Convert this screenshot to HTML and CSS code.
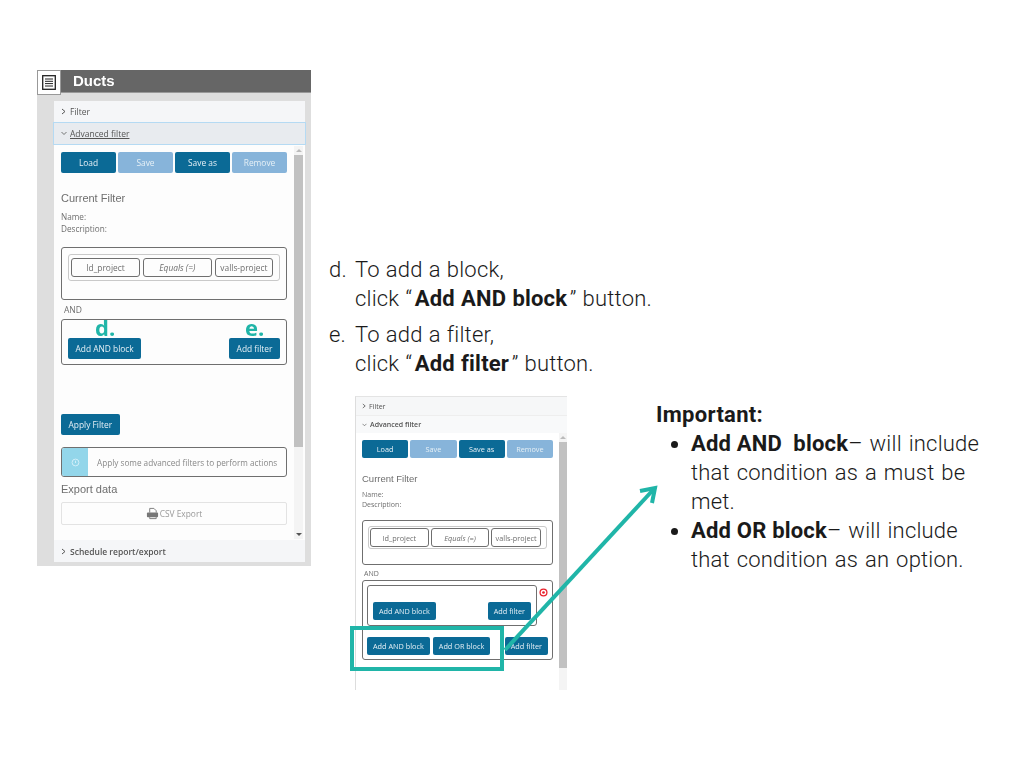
FILE: index.html
```html
<!DOCTYPE html>
<html lang="en">
<head>
  <meta charset="UTF-8" />
  <title>Ducts advanced filter</title>
  <link rel="stylesheet" href="styles.css">
</head>
<body>
  <div class="slide">

    <!-- big screenshot, left -->
    <div class="shot shot-main">
      <div class="title-bar">
        <span class="title-icon">
          <svg width="14" height="15" viewBox="0 0 14 15"><rect x="0.7" y="0.7" width="12.6" height="13.6" fill="none" stroke="#222" stroke-width="1.3"/><path d="M3 4h8M3 6.3h8M3 8.6h8M3 11h8" stroke="#222"/></svg>
        </span>
        <span class="title-text">Ducts</span>
      </div>
      <div class="shot-body">
        <div class="sheet">
          <div class="row-head">
            <svg class="chev" width="5" height="7" viewBox="0 0 5 7"><path d="M1 1l3 2.5L1 6" fill="none" stroke="#555"/></svg>
            <span>Filter</span>
          </div>
          <div class="row-head row-open">
            <svg class="chev" width="6" height="5" viewBox="0 0 6 5"><path d="M.5 1L3 3.5 5.5 1" fill="none" stroke="#555" stroke-width=".8"/></svg>
            <u>Advanced filter</u>
          </div>
          <div class="content">
            <div class="scrollbar"><span class="arrow-up"></span><span class="thumb"></span><span class="arrow-down"></span></div>
            <div class="btn-row">
              <span class="btn">Load</span>
              <span class="btn off">Save</span>
              <span class="btn">Save as</span>
              <span class="btn off">Remove</span>
            </div>
            <div class="current">Current Filter</div>
            <div class="meta">Name:<br>Description:</div>
            <div class="box box-first">
              <div class="rule">
                <span class="pill">Id_project</span>
                <span class="pill"><i>Equals (=)</i></span>
                <span class="pill">valls-project</span>
              </div>
            </div>
            <div class="and">AND</div>
            <div class="box box-add">
              <span class="btn">Add AND block</span>
              <span class="btn">Add filter</span>
              <span class="tag tag-d">d.</span>
              <span class="tag tag-e">e.</span>
            </div>
            <span class="btn apply">Apply Filter</span>
            <div class="alert">
              <span class="alert-icon">
                <svg width="9" height="9" viewBox="0 0 10 10"><circle cx="5" cy="5" r="3.8" fill="none" stroke="#d8f1f9" stroke-width="1"/><path d="M5 3v2.6" stroke="#d8f1f9"/></svg>
              </span>
              <span class="alert-text">Apply some advanced filters to perform actions</span>
            </div>
            <div class="export-title">Export data</div>
            <div class="csv">
              <svg width="13" height="13" viewBox="0 0 14 14"><path d="M4 6V1.5h4.5L11 4v2M4 11v1.5h7V11" fill="none" stroke="#777"/><rect x="1" y="6" width="12" height="5" rx="1" fill="#777"/></svg>
              <span>CSV Export</span>
            </div>
          </div>
          <div class="row-head row-last">
            <svg class="chev" width="5" height="7" viewBox="0 0 5 7"><path d="M1 1l3 2.5L1 6" fill="none" stroke="#555"/></svg>
            <span>Schedule report/export</span>
          </div>
        </div>
      </div>
    </div>

    <div class="steps">
      <div class="step"><span class="step-mark">d.</span><p>To add a block,<br>click “<b>Add AND block</b>” button.</p></div>
      <div class="step"><span class="step-mark">e.</span><p>To add a filter,<br>click “<b>Add filter</b>” button.</p></div>
    </div>

    <!-- small screenshot, middle -->
    <div class="shot shot-small">
      <div class="sheet">
        <div class="row-head">
          <svg class="chev" width="4" height="6" viewBox="0 0 5 7"><path d="M1 1l3 2.5L1 6" fill="none" stroke="#555"/></svg>
          <span>Filter</span>
        </div>
        <div class="row-head row-open">
          <svg class="chev" width="5" height="4" viewBox="0 0 6 5"><path d="M.5 1L3 3.5 5.5 1" fill="none" stroke="#555" stroke-width=".8"/></svg>
          <span>Advanced filter</span>
        </div>
        <div class="content">
          <div class="scrollbar"><span class="arrow-up"></span><span class="thumb"></span></div>
          <div class="btn-row">
            <span class="btn">Load</span>
            <span class="btn off">Save</span>
            <span class="btn">Save as</span>
            <span class="btn off">Remove</span>
          </div>
          <div class="current">Current Filter</div>
          <div class="meta">Name:<br>Description:</div>
          <div class="box box-first">
            <div class="rule">
              <span class="pill">Id_project</span>
              <span class="pill"><i>Equals (=)</i></span>
              <span class="pill">valls-project</span>
            </div>
          </div>
          <div class="and">AND</div>
          <div class="box box-nested">
            <div class="nested">
              <span class="btn">Add AND block</span>
              <span class="btn">Add filter</span>
              <svg class="remove-icon" width="9" height="9" viewBox="0 0 10 10"><circle cx="5" cy="5" r="3.8" fill="none" stroke="#e8202a" stroke-width="1.4"/><circle cx="5" cy="5" r="1.5" fill="#e8202a"/></svg>
            </div>
            <div class="nested-btns">
              <span class="btn">Add AND block</span>
              <span class="btn">Add OR block</span>
              <span class="btn push">Add filter</span>
            </div>
          </div>
        </div>
      </div>
    </div>

    <!-- teal highlight and arrow over the small screenshot -->
    <div class="highlight"></div>
    <svg class="pointer" width="180" height="190" viewBox="0 0 180 190">
      <path d="M2 177L150 17" stroke="#20b5a8" stroke-width="4" fill="none"/>
      <path d="M137 18L152 15L149 30" stroke="#20b5a8" stroke-width="4" fill="none"/>
    </svg>

    <div class="notes">
      <div class="notes-title">Important:</div>
      <ul>
        <li><b>Add AND&nbsp; block</b>– will include that condition as a must be met.</li>
        <li><b>Add OR block</b>– will include that condition as an option.</li>
      </ul>
    </div>

  </div>
</body>
</html>
```

FILE: styles.css
```css
:root {
  --teal: #20b5a8;
  --btn: #0b6a96;
  --btn-off: #87b4da;
  --line: #6f6f6f;
  --text-grey: #6e6e6e;
}

html, body {
  margin: 0;
  background: #fff;
}

.slide {
  position: relative;
  width: 1024px;
  height: 768px;
  overflow: hidden;
  background: #fff;
  font-family: Roboto, sans-serif;
  font-weight: 300;
  color: #1a1a1a;
}

/* screenshots */
.shot {
  position: absolute;
  box-sizing: border-box;
  font-family: "Open Sans", sans-serif;
  font-weight: 400;
  color: var(--text-grey);
  filter: blur(0.35px);
}

.shot-main {
  left: 37px;
  top: 70px;
  width: 274px;
  height: 496px;
  display: flex;
  flex-direction: column;
  background: #dedede;
  font-size: 8.4px;
}

.title-bar {
  height: 22px;
  display: flex;
  align-items: flex-start;
  background: #666;
  border-bottom: 1px solid #999;
  flex: none;
}

.title-icon {
  box-sizing: border-box;
  width: 24px;
  height: 25px;
  display: flex;
  align-items: center;
  justify-content: center;
  background: #fff;
  border: 1px solid #999;
  flex: none;
}

.title-text {
  margin-left: 12px;
  font-family: "Liberation Sans", sans-serif;
  font-size: 15px;
  line-height: 21px;
  font-weight: 700;
  color: #fff;
}

.shot-body {
  flex: 1;
  min-height: 0;
  padding: 8px 6px 4px 17px;
  display: flex;
}

.sheet {
  flex: 1;
  display: flex;
  flex-direction: column;
  background: #fdfdfd;
  min-width: 0;
}

.row-head {
  flex: none;
  box-sizing: border-box;
  height: 21px;
  padding-left: 7px;
  display: flex;
  align-items: center;
  gap: 4px;
  white-space: pre;
  background: #f5f6f8;
  color: #555;
  font-size: 8.5px;
}

.row-open {
  height: 23px;
  margin: 0 -1px;
  padding-left: 7px;
  gap: 3px;
  background: #e8ebef;
  border: 1px solid #b5daf3;
}

.row-last {
  height: 22px;
  font-weight: 600;
}

.content {
  position: relative;
  flex: 1;
  min-height: 0;
  box-sizing: border-box;
  padding: 7px 18px 0 7px;
  display: flex;
  flex-direction: column;
}

.scrollbar {
  position: absolute;
  top: 1px;
  bottom: 1px;
  right: 2px;
  width: 9px;
  display: flex;
  flex-direction: column;
  align-items: center;
  background: #f4f4f4;
}

.thumb {
  width: 100%;
  height: 292px;
  margin-top: 3px;
  background: #c1c1c1;
}

.arrow-up, .arrow-down {
  flex: none;
  margin-top: 3px;
  border-left: 3px solid transparent;
  border-right: 3px solid transparent;
  border-bottom: 3px solid #bbb;
}

.arrow-down {
  margin-top: auto;
  margin-bottom: 3px;
  border-bottom: 0;
  border-top: 3px solid #555;
}

.btn-row {
  display: flex;
  gap: 2px;
}

.btn-row .btn {
  flex: 1;
}

.btn {
  box-sizing: border-box;
  height: 21px;
  padding: 0 7.5px;
  display: flex;
  align-items: center;
  justify-content: center;
  border-radius: 2px;
  background: var(--btn);
  color: #e6f0f6;
  white-space: nowrap;
}

.btn.off {
  background: var(--btn-off);
}

.current {
  margin-top: 18px;
  font-family: "Liberation Sans", sans-serif;
  font-size: 11px;
  line-height: 14px;
}

.meta {
  margin-top: 6px;
  font-size: 8.2px;
  line-height: 12px;
}

.box {
  box-sizing: border-box;
  border: 1px solid var(--line);
  border-radius: 3px;
}

.box-first {
  height: 53px;
  margin-top: 12px;
  padding: 6px;
}

.rule {
  box-sizing: border-box;
  height: 27px;
  padding: 3px 6px 3px 2px;
  display: flex;
  gap: 3px;
  border: 1px solid #c9c9c9;
  border-radius: 3px;
}

.pill {
  box-sizing: border-box;
  height: 19px;
  flex: 69;
  display: flex;
  align-items: center;
  justify-content: center;
  border: 1px solid var(--line);
  border-radius: 3px;
  white-space: nowrap;
}

.pill:last-child {
  flex: 58;
}

.and {
  margin: 4px 0 3px 3px;
  font-size: 8.5px;
  line-height: 12px;
}

.box-add {
  position: relative;
  height: 46px;
  padding: 18px 6px 0;
  display: flex;
  justify-content: space-between;
}

.tag {
  position: absolute;
  top: -5px;
  font-size: 22px;
  line-height: 24px;
  font-weight: 700;
  color: var(--teal);
}

.tag-d { left: 33px; }
.tag-e { left: 183px; }

.apply {
  align-self: flex-start;
  margin-top: 49px;
}

.alert {
  height: 30px;
  margin-top: 12px;
  box-sizing: border-box;
  display: flex;
  align-items: center;
  border: 1px solid var(--line);
  border-radius: 3px;
  overflow: hidden;
}

.alert-icon {
  width: 26px;
  align-self: stretch;
  display: flex;
  align-items: center;
  justify-content: center;
  background: #93d6ea;
}

.alert-text {
  margin-left: 9px;
  font-size: 8.2px;
  white-space: nowrap;
  color: #888;
}

.export-title {
  margin-top: 5px;
  font-family: "Liberation Sans", sans-serif;
  font-size: 11px;
  line-height: 15px;
}

.csv {
  height: 23px;
  margin-top: 5px;
  box-sizing: border-box;
  display: flex;
  align-items: center;
  justify-content: center;
  gap: 1px;
  border: 1px solid #e3e3e3;
  border-radius: 2px;
  color: #999;
}

/* smaller copy */
.shot-small {
  left: 355px;
  top: 396px;
  width: 212px;
  height: 294px;
  display: flex;
  font-size: 7.3px;
  background: #fff;
  border-left: 1px solid #ddd;
  border-top: 1px solid #e4e4e4;
}

.shot-small .sheet {
  background: #fff;
}

.shot-small .row-head {
  height: 19px;
  padding-left: 6px;
  gap: 3px;
  font-size: 7px;
  background: #f6f7f8;
  border-bottom: 1px solid #eee;
}

.shot-small .row-open {
  margin: 0;
  height: 17px;
  border: 0;
  font-weight: 600;
  background: #f8f9fa;
}

.shot-small .content {
  padding: 7px 14px 0 6px;
}

.shot-small .scrollbar {
  top: 0;
  bottom: 0;
  right: 0;
  width: 8px;
}

.shot-small .thumb {
  height: 226px;
  margin-top: 3px;
}

.shot-small .btn {
  height: 18px;
  padding: 0 6px;
}

.shot-small .current {
  margin-top: 15px;
  font-size: 9.5px;
  line-height: 12px;
}

.shot-small .meta {
  margin-top: 5px;
  font-size: 7px;
  line-height: 10px;
}

.shot-small .box-first {
  height: 45px;
  margin-top: 10px;
  padding: 5px;
}

.shot-small .rule {
  height: 23px;
  padding: 1px 5px 1px 1px;
  gap: 2px;
}

.shot-small .pill {
  height: 19px;
}

.shot-small .and {
  margin: 3px 0 0 2px;
  font-size: 7px;
}

.box-nested {
  height: 80px;
  padding: 4px;
  display: flex;
  flex-direction: column;
  gap: 11px;
}

.nested {
  position: relative;
  box-sizing: border-box;
  flex: none;
  width: 170px;
  height: 41px;
  padding: 16px 5px 0;
  display: flex;
  justify-content: space-between;
  border: 1px solid var(--line);
  border-radius: 3px;
}

.remove-icon {
  position: absolute;
  top: 2px;
  right: -12px;
}

.nested-btns {
  display: flex;
  gap: 3px;
}

.push {
  margin-left: auto;
}

.highlight {
  position: absolute;
  left: 350px;
  top: 626px;
  width: 154px;
  height: 45px;
  box-sizing: border-box;
  border: 4px solid var(--teal);
}

.pointer {
  position: absolute;
  left: 503px;
  top: 473px;
}

/* slide copy */
.steps {
  position: absolute;
  left: 329px;
  top: 255px;
  font-size: 22px;
  line-height: 29px;
  letter-spacing: 0.2px;
  word-spacing: 0.5px;
}

.step {
  display: flex;
  margin-bottom: 7px;
}

.step-mark {
  width: 26px;
}

.step p, .notes ul {
  margin: 0;
}

.steps b, .notes b {
  font-weight: 700;
}

.steps b {
  margin: 0 2.5px;
}

.notes {
  position: absolute;
  left: 656px;
  top: 400px;
  width: 329px;
  font-size: 22px;
  line-height: 29px;
  letter-spacing: 0.2px;
  word-spacing: 1.3px;
}

.notes b {
  word-spacing: 0;
}

.notes-title {
  font-weight: 700;
  letter-spacing: 0.3px;
}

.notes ul {
  padding-left: 35px;
}
```
